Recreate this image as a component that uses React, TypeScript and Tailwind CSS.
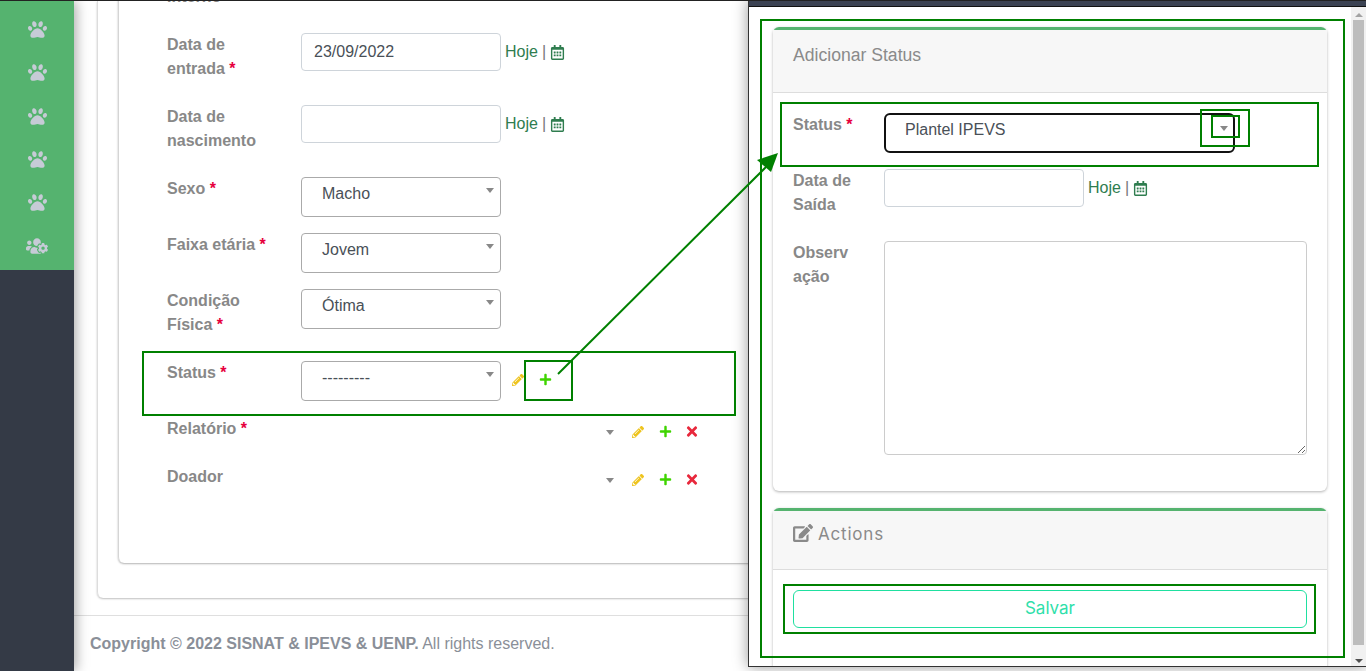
import React from 'react';
import { FaPaw, FaUsersCog, FaPencilAlt, FaPlus, FaTimes, FaRegCalendarAlt, FaEdit } from 'react-icons/fa';

const Req = () => <span className="text-[#e6003c]"> *</span>;

const Caret = () => (
  <span className="block w-0 h-0 border-l-[4px] border-r-[4px] border-t-[5px] border-l-transparent border-r-transparent border-t-[#888888]" />
);

const Hoje = () => (
  <span className="flex items-center text-[#2f7d4f] whitespace-nowrap">
    Hoje <span className="text-[#777] mx-[4px]">|</span>
    <FaRegCalendarAlt className="text-[15px] mt-[1px]" />
  </span>
);

const Select = ({ value }: { value: string }) => (
  <div className="relative w-[200px] h-[40px] border border-[#aaaaaa] rounded-[4px] bg-white pl-[20px] pt-[4px] text-[#495057]">
    {value}
    <span className="absolute right-[6px] top-[10px]"><Caret /></span>
  </div>
);

const DateInput = ({ value }: { value?: string }) => (
  <div className="w-[200px] h-[38px] border border-[#ced4da] rounded-[4px] bg-white px-[12px] pt-[6px] text-[#495057]">
    {value}
  </div>
);

const Row = ({ label, className, children }: { label: React.ReactNode; className: string; children?: React.ReactNode }) => (
  <div className={`flex ${className}`}>
    <div className="w-[134px] shrink-0 font-bold text-[#888888]">{label}</div>
    {children}
  </div>
);

const Actions = ({ remove }: { remove?: boolean }) => (
  <div className="flex items-center gap-[13px]">
    <span className="w-[14px] flex justify-center"><FaPencilAlt className="text-[#eec41f] text-[12px]" /></span>
    <span className="w-[14px] flex justify-center"><FaPlus className="text-[#3fd400] text-[13px]" /></span>
    {remove && <span className="w-[14px] flex justify-center"><FaTimes className="text-[#e8283c] text-[15px]" /></span>}
  </div>
);

export default function App() {
  return (
    <div className="relative flex w-[1366px] h-[671px] overflow-hidden bg-white border-t border-[#222] text-[16px] leading-[24px] font-['Liberation_Sans',sans-serif]">
      <aside className="w-[74px] shrink-0 flex flex-col bg-[#343a46] z-10 shadow-[2px_0_12px_rgba(0,0,0,0.35)]">
        <div className="h-[269px] bg-[#55b36f] flex flex-col items-center pt-[19px] gap-[24.25px] text-[#c6cbd6] text-[19px]">
          <FaPaw />
          <FaPaw />
          <FaPaw />
          <FaPaw />
          <FaPaw />
          <FaUsersCog className="text-[22px] -mt-[1px]" />
        </div>
      </aside>

      <main className="flex-1 flex flex-col min-w-0">
        <div className="mx-[23px] h-[597px] shrink-0 border-l border-[#dddddd] rounded-b-[6px] shadow-[0_1px_2px_rgba(0,0,0,0.25)] pl-[20px] pr-[21px]">
          <div className="h-[578px] border-l border-[#d5d5d5] rounded-b-[6px] shadow-[0_1px_2px_rgba(0,0,0,0.3)] pl-[48px] -mt-[1px]">
            <div className="-mt-[16px] flex flex-col">
              <Row label="Interno" className="h-[48px]" />
              <Row label={<>Data de<br />entrada<Req /></>} className="h-[72px]">
                <div className="flex items-start gap-[4px]">
                  <DateInput value="23/09/2022" />
                  <span className="pt-[7px]"><Hoje /></span>
                </div>
              </Row>
              <Row label={<>Data de<br />nascimento</>} className="h-[72px]">
                <div className="flex items-start gap-[4px]">
                  <DateInput />
                  <span className="pt-[7px]"><Hoje /></span>
                </div>
              </Row>
              <Row label={<>Sexo<Req /></>} className="h-[56px]">
                <Select value="Macho" />
              </Row>
              <Row label={<>Faixa etária<Req /></>} className="h-[56px]">
                <Select value="Jovem" />
              </Row>
              <Row label={<>Condição<br />Física<Req /></>} className="h-[72px]">
                <Select value="Ótima" />
              </Row>
              <Row label={<>Status<Req /></>} className="h-[56px]">
                <div className="flex items-start gap-[10px]">
                  <Select value="---------" />
                  <div className="pt-[12px]"><Actions /></div>
                </div>
              </Row>
              <Row label={<>Relatório<Req /></>} className="h-[48px]">
                <div className="w-[313px] flex justify-end pt-[13px]"><Caret /></div>
                <div className="pl-[17px] pt-[7px]"><Actions remove /></div>
              </Row>
              <Row label="Doador" className="h-[48px]">
                <div className="w-[313px] flex justify-end pt-[13px]"><Caret /></div>
                <div className="pl-[17px] pt-[7px]"><Actions remove /></div>
              </Row>
            </div>
          </div>
        </div>
        <footer className="mt-[17px] border-t border-[#dfdfdf] pl-[16px] pt-[16px] text-[#8a8f98]">
          <b>Copyright © 2022 SISNAT &amp; IPEVS &amp; UENP.</b> All rights reserved.
        </footer>
      </main>

      {/* popup window on top of the page */}
      <div className="absolute left-[748px] -top-[1px] w-[618px] h-[667px] z-20 flex flex-col bg-white border-l border-b border-[#333] shadow-[0_0_14px_rgba(0,0,0,0.4)]">
        <div className="h-[7px] shrink-0 bg-[#3b4252] border-b border-[#111]" />
        <div className="flex-1 flex min-h-0">
          <div className="flex-1 overflow-hidden pl-[24px] pr-[24px] pt-[20px]">
            <section className="h-[464px] border-t-[3px] border-t-[#55b36f] rounded-[6px] shadow-[0_1px_3px_rgba(0,0,0,0.3)]">
              <div className="h-[63px] bg-[#f7f7f7] border-b border-[#dddddd] pl-[20px] pt-[12px] text-[17.6px] leading-[27px] text-[#8a8a8a]">
                Adicionar Status
              </div>
              <div className="pl-[20px] pt-[20px] flex flex-col">
                <div className="flex h-[56px]">
                  <div className="w-[91px] font-bold text-[#888888]">Status<Req /></div>
                  <div className="w-[351px] h-[40px] border-2 border-[#111] rounded-[6px] pl-[19px] pt-[3px] text-[#495057] relative">
                    Plantel IPEVS
                    <span className="absolute right-[5px] top-[11px]"><Caret /></span>
                  </div>
                </div>
                <div className="flex h-[72px]">
                  <div className="w-[91px] font-bold text-[#888888]">Data de<br />Saída</div>
                  <div className="flex items-start gap-[4px]">
                    <DateInput />
                    <span className="pt-[7px]"><Hoje /></span>
                  </div>
                </div>
                <div className="flex">
                  <div className="w-[91px] font-bold text-[#888888]">Observ<br />ação</div>
                  <textarea readOnly className="w-[423px] h-[214px] border border-[#cccccc] rounded-[4px] bg-white outline-none" />
                </div>
              </div>
            </section>
            <section className="mt-[17px] h-[170px] border-t-[3px] border-t-[#55b36f] rounded-[6px] shadow-[0_1px_3px_rgba(0,0,0,0.3)]">
              <div className="h-[59px] bg-[#f7f7f7] border-b border-[#dddddd] pl-[20px] pt-[11px] flex items-start text-[#8a8a8a]">
                <FaEdit className="text-[20px] mr-[5px] mt-[1px]" />
                <span className="font-['Inter',sans-serif] text-[17px] tracking-[0.8px]">Actions</span>
              </div>
              <div className="px-[20px] pt-[20px]">
                <div className="h-[38px] border border-[#1fe0a0] rounded-[6px] flex items-center justify-center pb-[2px] font-['Inter',sans-serif] text-[17px] text-[#2fe0aa]">
                  Salvar
                </div>
              </div>
            </section>
          </div>
          <div className="w-[15px] shrink-0 bg-[#f1f1f1] flex flex-col items-center pt-[6px] pb-[3px]">
            <span className="block w-0 h-0 border-l-[4px] border-r-[4px] border-b-[4px] border-l-transparent border-r-transparent border-b-[#a3a3a3]" />
            <div className="w-[11px] flex-1 bg-[#bdbdbd] mt-[3px] mb-[14px]" />
            <span className="block w-0 h-0 border-l-[4px] border-r-[4px] border-t-[4px] border-l-transparent border-r-transparent border-t-[#505050]" />
          </div>
        </div>
      </div>

      {/* green annotations drawn over the screenshot */}
      <div className="absolute left-[142px] top-[350px] w-[594px] h-[65px] border-2 border-[#008000] z-30" />
      <div className="absolute left-[524px] top-[359px] w-[49px] h-[41px] border-2 border-[#008000] z-30" />
      <div className="absolute left-[760px] top-[18px] w-[585px] h-[639px] border-2 border-[#008000] z-30" />
      <div className="absolute left-[780px] top-[101px] w-[539px] h-[65px] border-2 border-[#008000] z-30" />
      <div className="absolute left-[1200px] top-[108px] w-[50px] h-[38px] border-2 border-[#008000] z-30" />
      <div className="absolute left-[1211px] top-[114px] w-[29px] h-[23px] border-2 border-[#008000] z-30" />
      <div className="absolute left-[783px] top-[583px] w-[533px] h-[50px] border-2 border-[#008000] z-30" />
      <svg className="absolute left-0 top-[-1px] z-30 pointer-events-none" width="1366" height="671" fill="none">
        <line x1="558" y1="374" x2="766" y2="167" stroke="#008000" strokeWidth="2" />
        <polygon points="778,153 771,172 757,160" fill="#008000" />
      </svg>
    </div>
  );
}
